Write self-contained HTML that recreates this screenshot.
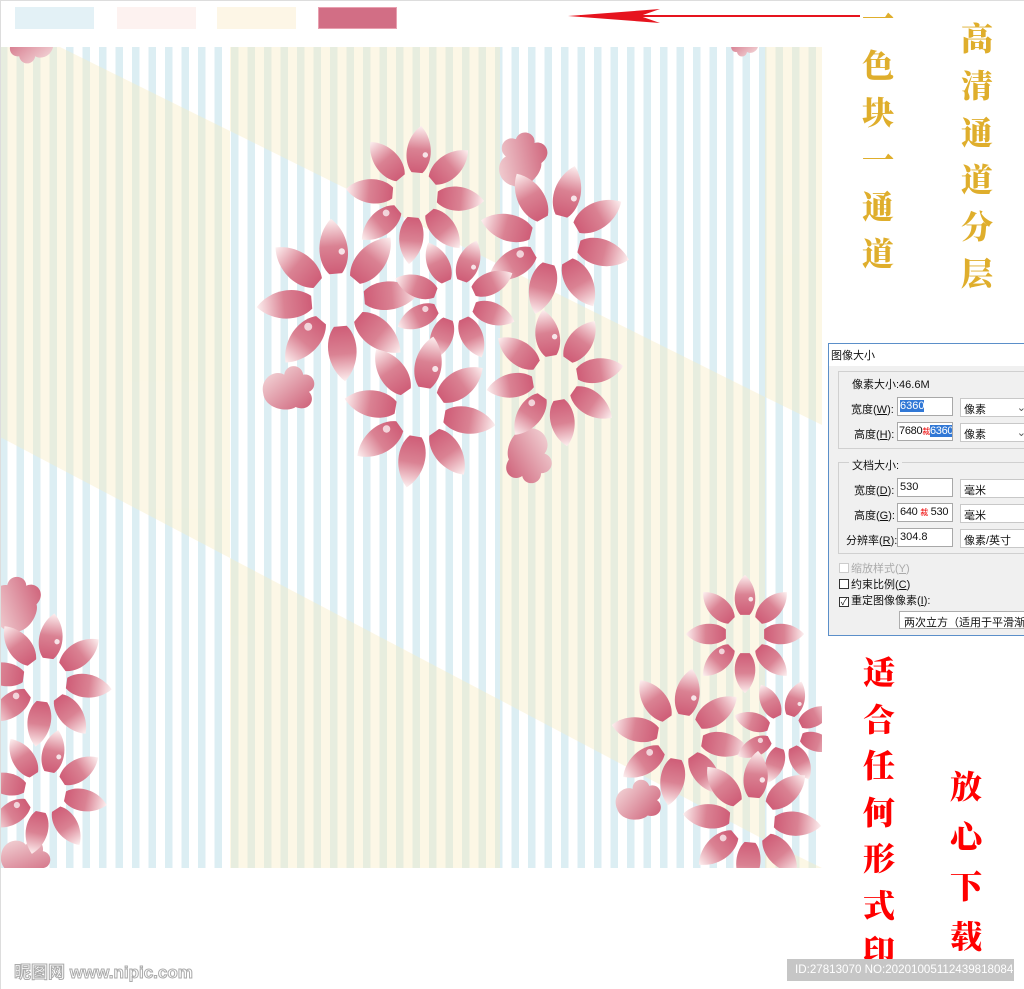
<!DOCTYPE html>
<html><head><meta charset="utf-8">
<style>
*{margin:0;padding:0;box-sizing:border-box}
body{width:1024px;height:989px;background:#fff;position:relative;overflow:hidden;font-family:"Liberation Sans","Noto Sans CJK SC",sans-serif}
.abs{position:absolute}
.sw{position:absolute;top:7px;height:22px;width:79px}
.col{position:absolute;font-family:"Noto Serif CJK SC","Noto Sans CJK SC",serif;font-weight:900;text-align:center;font-size:32px;line-height:47px;width:44px}
.dlg{position:absolute;left:828px;top:343px;width:200px;height:293px;background:#f0f0f0;border:1px solid #5b8fc9;font-size:11px;color:#111}
.dlg .t{position:absolute;left:0;top:0;width:100%;height:22px;background:#fff;padding:3px 2px}
.grp{position:absolute;left:9px;width:200px;border:1px solid #d0d0d0}
.lbl{position:absolute;font-size:11px;white-space:nowrap}
.inp{position:absolute;height:19px;width:56px;background:#fff;border:1px solid #a8a8a8;padding:2px 2px;font-size:11px;white-space:nowrap;overflow:hidden}
.sel{position:absolute;left:131px;height:19px;width:70px;background:#fff;border:1px solid #c8c8c8;padding:2px 3px;font-size:11px;white-space:nowrap}
.cb{display:inline-block;width:10px;height:10px;border:1px solid #333;background:#fff;vertical-align:-1px;margin-right:2px}
u{text-decoration:underline}
</style></head><body>
<div class="sw" style="left:15px;background:#e3f1f6"></div>
<div class="sw" style="left:117px;background:#fdf2f0"></div>
<div class="sw" style="left:217px;background:#fdf6e6"></div>
<div class="sw" style="left:318px;background:#d26e85;border:1px solid #e8a0b0"></div>

<svg class="abs" style="left:0;top:0" width="1024" height="989">
<defs>
<pattern id="st" x="0" y="0" width="16.5" height="10" patternUnits="userSpaceOnUse">
<rect x="0" y="0" width="7.5" height="10" fill="#dceef3"/>
</pattern>
<linearGradient id="pg" x1="0" y1="1" x2="0" y2="0">
<stop offset="0" stop-color="#cf5d77"/><stop offset="0.5" stop-color="#da8293"/><stop offset="1" stop-color="#fdf0f0"/>
</linearGradient>
<linearGradient id="bg2" x1="1" y1="1" x2="0" y2="0">
<stop offset="0" stop-color="#cc5a73"/><stop offset="1" stop-color="#f7e2e2"/>
</linearGradient>
<path id="pt" d="M-8,-33 C-23,-50 -21,-83 0,-102 C21,-83 23,-50 8,-33 Z" fill="url(#pg)"/>
<g id="fl">
<use href="#pt"/><use href="#pt" transform="rotate(45)"/><use href="#pt" transform="rotate(90)"/><use href="#pt" transform="rotate(135)"/>
<use href="#pt" transform="rotate(180)"/><use href="#pt" transform="rotate(225)"/><use href="#pt" transform="rotate(270)"/><use href="#pt" transform="rotate(315)"/>
<circle cx="10" cy="-60" r="4" fill="#fff" opacity=".8"/><circle cx="-40" cy="30" r="5" fill="#fff" opacity=".7"/>
</g>
<path id="bl" d="M-26,6 C-30,-10 -14,-20 -4,-14 C-2,-26 14,-26 16,-14 C28,-16 32,0 22,4 C30,12 22,26 8,20 C0,26 -24,22 -26,6Z" fill="url(#bg2)"/>
</defs>
<rect x="0" y="47" width="822" height="821" fill="url(#st)"/>
<g fill="rgb(248,236,192)" opacity=".4">
<polygon points="0,47 60,47 230,131 230,558 0,437"/>
<polygon points="230,47 500,47 500,265 230,131"/>
<polygon points="230,558 500,700 500,868 230,868"/>
<polygon points="500,265 765,397 765,840 500,700"/>
<polygon points="765,47 822,47 822,425 765,397"/>
<polygon points="765,840 822,868 765,868"/>
</g>
<svg x="0" y="47" width="822" height="821" overflow="hidden"><g transform="translate(0,-47)">
<use href="#bl" transform="translate(520,160) scale(1) rotate(-60)"/>
<use href="#bl" transform="translate(288,388) scale(.95)"/>
<use href="#bl" transform="translate(530,455) scale(1) rotate(100)"/>
<use href="#bl" transform="translate(638,800) scale(.85) rotate(-10)"/>
<use href="#bl" transform="translate(15,605) scale(1) rotate(-70)"/>
<use href="#bl" transform="translate(25,858) scale(.9) rotate(20)"/>
<use href="#bl" transform="translate(32,45) scale(.8) rotate(180)"/>
<use href="#bl" transform="translate(745,45) scale(.5) rotate(180)"/>
<use href="#fl" transform="translate(415,195) scale(.68) rotate(5)"/>
<use href="#fl" transform="translate(555,240) scale(.75) rotate(15)"/>
<use href="#fl" transform="translate(338,300) scale(.8) rotate(-5)"/>
<use href="#fl" transform="translate(455,300) scale(.62) rotate(20)"/>
<use href="#fl" transform="translate(420,412) scale(.75) rotate(10)"/>
<use href="#fl" transform="translate(555,378) scale(.68) rotate(-10)"/>
<use href="#fl" transform="translate(45,680) scale(.66) rotate(8)"/>
<use href="#fl" transform="translate(45,792) scale(.62) rotate(12)"/>
<use href="#fl" transform="translate(745,634) scale(.58) rotate(0)"/>
<use href="#fl" transform="translate(680,737) scale(.68) rotate(10)"/>
<use href="#fl" transform="translate(785,732) scale(.52) rotate(18)"/>
<use href="#fl" transform="translate(752,820) scale(.68) rotate(5)"/>
</g></svg>
<line x1="580" y1="16" x2="860" y2="16" stroke="#e6141e" stroke-width="2"/>
<path d="M568,16 L660,9 L640,16 L660,23Z" fill="#e6141e"/>
<line x1="0" y1="0" x2="0" y2="989" stroke="#ddd" stroke-width="2"/>
<line x1="0" y1="0" x2="1024" y2="0" stroke="#ddd" stroke-width="2"/>
</svg>

<div class="col" style="left:856px;top:-6px;color:#dfae2c">一<br>色<br>块<br>一<br>通<br>道</div>
<div class="col" style="left:955px;top:14px;color:#dfae2c">高<br>清<br>通<br>道<br>分<br>层</div>
<div class="col" style="left:857px;top:648px;color:#f00;line-height:46.5px">适<br>合<br>任<br>何<br>形<br>式<br>印</div>
<div class="col" style="left:944px;top:760px;color:#f00;line-height:50px">放<br>心<br>下<br>载</div>

<div class="dlg">
<div class="t">图像大小</div>
<div class="grp" style="top:27px;height:78px"></div>
<div class="lbl" style="left:20px;top:32px;background:#f0f0f0;padding:0 3px">像素大小:46.6M</div>
<div class="lbl" style="left:22px;top:57px">宽度(<u>W</u>):</div>
<div class="inp" style="left:68px;top:53px"><span style="background:#3178d6;color:#fff">6360</span></div>
<div class="sel" style="top:54px">像素 <span style="float:right;color:#555">⌄</span></div>
<div class="lbl" style="left:25px;top:82px">高度(<u>H</u>):</div>
<div class="inp" style="left:68px;top:78px;padding:2px 0 0 1px;letter-spacing:-0.3px">7680<span style="color:#e00;font-size:8px">裁</span><span style="background:#3178d6;color:#fff">6360</span></div>
<div class="sel" style="top:79px">像素 <span style="float:right;color:#555">⌄</span></div>
<div class="grp" style="top:118px;height:92px"></div>
<div class="lbl" style="left:20px;top:113px;background:#f0f0f0;padding:0 3px">文档大小:</div>
<div class="lbl" style="left:25px;top:138px">宽度(<u>D</u>):</div>
<div class="inp" style="left:68px;top:134px">530</div>
<div class="sel" style="top:135px">毫米</div>
<div class="lbl" style="left:25px;top:163px">高度(<u>G</u>):</div>
<div class="inp" style="left:68px;top:159px;letter-spacing:-0.3px">640 <span style="color:#e00;font-size:8px">裁</span> 530</div>
<div class="sel" style="top:160px">毫米</div>
<div class="lbl" style="left:17px;top:188px">分辨率(<u>R</u>):</div>
<div class="inp" style="left:68px;top:184px">304.8</div>
<div class="sel" style="top:185px">像素/英寸</div>
<div class="lbl" style="left:10px;top:216px;color:#aaa"><span class="cb" style="border-color:#ccc"></span>缩放样式(<u>Y</u>)</div>
<div class="lbl" style="left:10px;top:232px"><span class="cb"></span>约束比例(<u>C</u>)</div>
<div class="lbl" style="left:10px;top:248px"><span class="cb" style="font-size:9px;line-height:8px;text-align:center">✓</span>重定图像像素(<u>I</u>):</div>
<div class="inp" style="left:70px;top:267px;width:140px;height:18px;border-color:#adadad;padding:2px 4px">两次立方（适用于平滑渐变</div>
</div>

<div class="abs" style="left:14px;top:958px;font-size:17px;font-weight:bold;color:#fff;-webkit-text-stroke:1px #aaa;white-space:nowrap">昵图网 www.nipic.com</div>
<div class="abs" style="left:787px;top:959px;width:227px;height:22px;background:#c6c6c6;color:#fff;font-size:11.6px;line-height:22px;padding-left:8px;white-space:nowrap;overflow:hidden">ID:27813070 NO:20201005112439818084</div>
</body></html>
